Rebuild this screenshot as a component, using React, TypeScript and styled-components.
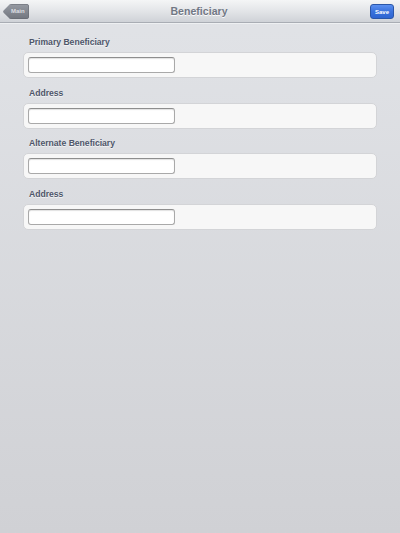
import React from "react";
import styled, { createGlobalStyle } from "styled-components";

const Global = createGlobalStyle`
  html, body { margin: 0; padding: 0; }
  body {
    width: 400px;
    height: 533px;
    overflow: hidden;
    font-family: "Liberation Sans", Arial, sans-serif;
  }
`;

const Page = styled.div`
  width: 400px;
  height: 533px;
  display: flex;
  flex-direction: column;
  background: linear-gradient(#e1e3e7, #d0d1d5);
`;

const NavBar = styled.header`
  height: 22px;
  flex: none;
  display: grid;
  grid-template-columns: 1fr auto 1fr;
  align-items: center;
  padding: 0 6px 0 4px;
  background: linear-gradient(#f4f5f6, #e3e5e8 50%, #cfd2d7);
  border-bottom: 1px solid #a9adb4;
  box-shadow: 0 1px 0 #eef0f2;
`;

const Title = styled.h1`
  margin: 0;
  font-size: 10.5px;
  font-weight: bold;
  color: #717784;
  text-shadow: 0 1px 0 #fbfbfc;
  letter-spacing: 0.05px;
`;

const BackButton = styled.button`
  justify-self: start;
  position: relative;
  margin-left: 5px;
  height: 15px;
  padding: 0 4px 0 2px;
  border: none;
  border-radius: 3px;
  background: linear-gradient(#979ba3, #71757e);
  color: #dcdee2;
  font: bold 6px "Liberation Sans", Arial, sans-serif;
  line-height: 15px;
  box-shadow: inset 0 0 0 0.5px #62666e;
  &::before {
    content: "";
    position: absolute;
    left: -4.5px;
    top: 2.2px;
    width: 10.6px;
    height: 10.6px;
    border-radius: 1.5px;
    transform: rotate(45deg);
    background: linear-gradient(135deg, #979ba3, #71757e);
  }
  span { position: relative; }
`;

const SaveButton = styled.button`
  justify-self: end;
  height: 15px;
  padding: 0 4px;
  border: 0.5px solid #2a56a8;
  border-radius: 3px;
  background: linear-gradient(#5a8ff0, #3a72dc 50%, #2d64d2);
  color: #ffffff;
  font: bold 6px "Liberation Sans", Arial, sans-serif;
  line-height: 14px;
`;

const Content = styled.main`
  display: flex;
  flex-direction: column;
  padding: 14px 23px 0 23px;
  gap: 9.7px;
`;

const Section = styled.section`
  display: flex;
  flex-direction: column;
  gap: 4px;
`;

const Label = styled.label`
  padding-left: 6px;
  font-size: 8.6px;
  font-weight: bold;
  color: #4e5669;
  text-shadow: 0 1px 0 #f2f3f5;
  line-height: 11px;
`;

const Group = styled.div`
  height: 26px;
  box-sizing: border-box;
  display: flex;
  align-items: center;
  padding: 0 4px;
  background: #f7f7f7;
  border: 1px solid #d3d4d7;
  border-radius: 5px;
`;

const Field = styled.input`
  width: 147px;
  height: 16px;
  box-sizing: border-box;
  border: 1px solid #a9a9a9;
  border-top-color: #8e8e8e;
  border-radius: 3px;
  background: #ffffff;
  box-shadow: inset 0 1px 1px rgba(0, 0, 0, 0.12);
  padding: 0 3px;
  font: 8px "Liberation Sans", Arial, sans-serif;
  outline: none;
`;

const sections = ["Primary Beneficiary", "Address", "Alternate Beneficiary", "Address"];

export default function App() {
  return (
    <>
      <Global />
      <Page>
        <NavBar>
          <BackButton>
            <span>Main</span>
          </BackButton>
          <Title>Beneficiary</Title>
          <SaveButton>Save</SaveButton>
        </NavBar>
        <Content>
          {sections.map((s, i) => (
            <Section key={i}>
              <Label>{s}</Label>
              <Group>
                <Field />
              </Group>
            </Section>
          ))}
        </Content>
      </Page>
    </>
  );
}
